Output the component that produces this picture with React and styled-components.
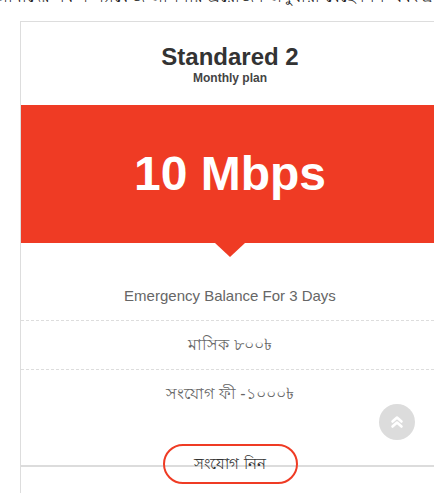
import React from "react";
import styled, { createGlobalStyle } from "styled-components";

const features = [
	{ text: "Emergency Balance For 3 Days", bn: false },
	{ text: "মাসিক ৮০০৳", bn: true },
	{ text: "সংযোগ ফী -১০০০৳", bn: true },
];

const GlobalStyle = createGlobalStyle`
	html, body {
		margin: 0;
		padding: 0;
		overflow: hidden;
		background: #fff;
		font-family: "Liberation Sans", Arial, sans-serif;
	}
`;

function App() {
	return (
		<Page>
			<GlobalStyle />
			<Intro>আমাদের সকল প্যাকেজ আপনার প্রয়োজন অনুযায়ী বেছে নিন এবং দ্রুত গতির ইন্টারনেট উপভোগ করুন সারাদিন</Intro>
			<PlanCard>
				<CardHead>
					<h3>Standared 2</h3>
					<p>Monthly plan</p>
				</CardHead>
				<SpeedBand>10 Mbps</SpeedBand>
				<FeatureList>
					{features.map((item, idx) => (
						<Feature key={idx} $bn={item.bn}>
							{item.text}
						</Feature>
					))}
				</FeatureList>
				<CardFoot>
					<ConnectButton>সংযোগ নিন</ConnectButton>
				</CardFoot>
				<CardBottom />
			</PlanCard>
			<ScrollTop aria-label="scroll to top">
				<svg width="14" height="14" viewBox="0 0 14 14" fill="none">
					<path d="M2.5 6.5L7 2.5L11.5 6.5" stroke="#fff" strokeWidth="2.6" strokeLinecap="round" strokeLinejoin="round" />
					<path d="M2.5 11.5L7 7.5L11.5 11.5" stroke="#fff" strokeWidth="2.6" strokeLinecap="round" strokeLinejoin="round" />
				</svg>
			</ScrollTop>
		</Page>
	);
}

const Page = styled.div`
	width: 434px;
	height: 493px;
	overflow: hidden;
`;

const Intro = styled.p`
	margin: -15px 0 0 -6px;
	white-space: nowrap;
	font-size: 16px;
	line-height: 24px;
	color: #222;
`;

const PlanCard = styled.div`
	width: 418px;
	margin: 12px 0 0 20px;
	border-top: 1px solid #ddd;
	border-left: 1px solid #ddd;
	text-align: center;
`;

const CardHead = styled.div`
	padding: 21px 0 20px;
	> h3 {
		margin: 0;
		font-size: 24px;
		line-height: 28px;
		font-weight: 700;
		color: #333;
	}
	> p {
		margin: 0;
		font-size: 12px;
		line-height: 14px;
		font-weight: 700;
		color: #444;
	}
`;

const SpeedBand = styled.div`
	position: relative;
	display: flex;
	align-items: center;
	justify-content: center;
	height: 138px;
	padding-bottom: 2px;
	box-sizing: border-box;
	background: #ef3b24;
	color: #fff;
	font-size: 48px;
	font-weight: 700;
	&::after {
		content: "";
		position: absolute;
		left: 50%;
		bottom: -14px;
		margin-left: -15px;
		border-left: 15px solid transparent;
		border-right: 15px solid transparent;
		border-top: 14px solid #ef3b24;
	}
`;

const FeatureList = styled.ul`
	list-style: none;
	margin: 0;
	padding: 29px 0 0;
`;

const Feature = styled.li`
	height: 48px;
	line-height: 48px;
	font-size: ${(p) => (p.$bn ? "16px" : "15px")};
	color: #666;
	border-bottom: 1px dashed #ddd;
	&:last-child {
		border-bottom: none;
	}
`;

const CardFoot = styled.div`
	padding-top: 26px;
`;

const ConnectButton = styled.button`
	width: 135px;
	height: 40px;
	margin-bottom: -19px;
	border: 2px solid #ef3b24;
	border-radius: 20px;
	background: transparent;
	font-family: "Liberation Sans", Arial, sans-serif;
	font-size: 15px;
	color: #333;
	vertical-align: top;
`;

const CardBottom = styled.div`
	height: 40px;
	border-top: 2px solid #dcdcdc;
`;

const ScrollTop = styled.div`
	position: fixed;
	left: 379px;
	top: 404px;
	width: 36px;
	height: 36px;
	border-radius: 50%;
	background: #dcdcdc;
	display: flex;
	align-items: center;
	justify-content: center;
`;

export default App;
